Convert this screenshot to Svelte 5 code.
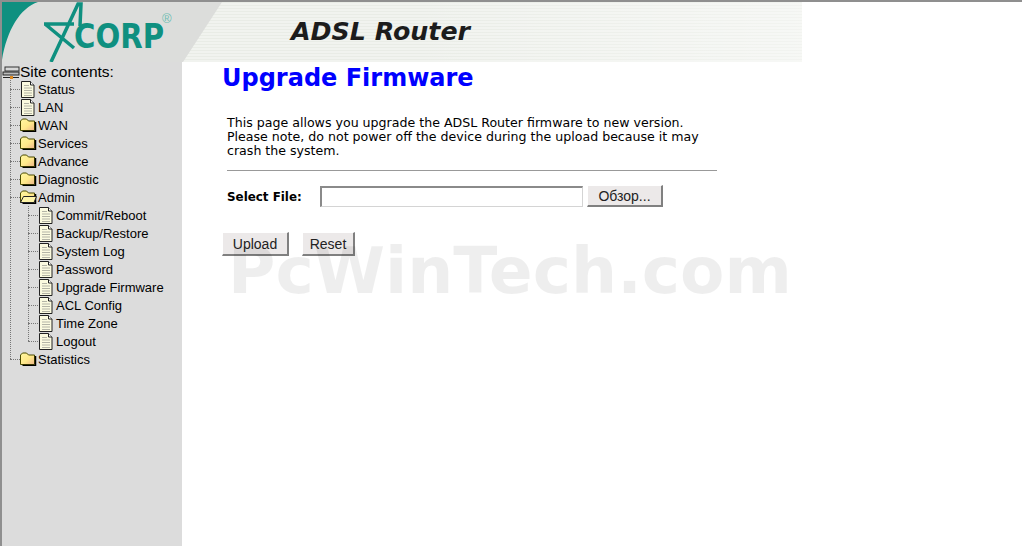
<script>
  const topItems = ['Status', 'LAN']
  const folders = ['WAN', 'Services', 'Advance', 'Diagnostic']
  const adminItems = ['Commit/Reboot', 'Backup/Restore', 'System Log', 'Password', 'Upgrade Firmware', 'ACL Config', 'Time Zone', 'Logout']
</script>

{#snippet docIcon()}
  <span class="box">
    <svg class="doc" width="14" height="17" viewBox="0 0 14 17">
      <path d="M.5.5h9l3.500 3.500v12.500h-12.500z" fill="#fbfadf" stroke="#222" />
      <path d="M9.500.5v3.500h3.500" fill="#fff" stroke="#222" />
      <path d="M3 4.500h5M3 7h8M3 9.500h8M3 12h8M3 14.500h8" stroke="#b4b4a6" />
    </svg>
  </span>
{/snippet}

{#snippet folderIcon(open)}
  <span class="box">
    <svg width="17" height="14" viewBox="0 0 17 14">
      <defs>
        <linearGradient id="fold" x1="0" y1="0" x2="1" y2="1">
          <stop offset="0" stop-color="#fff7a0" />
          <stop offset=".55" stop-color="#ffe98a" />
          <stop offset="1" stop-color="#eeb48c" />
        </linearGradient>
      </defs>
      <path d="M.5 3l2-2h4l2 2h6v9.500h-14z" fill="url(#fold)" stroke="#4a4a00" />
      <path d="M15.500 4v9.500h-13" fill="none" stroke="#000" stroke-width="1.500" />
      {#if open}
        <path d="M.5 12.500l3-6h13l-2.500 6z" fill="#fff5a8" stroke="#222" />
      {/if}
    </svg>
  </span>
{/snippet}

<div class="page">
  <header class="banner">
    <svg class="logo" width="134" height="60" viewBox="0 0 134 60">
      <path d="M2 22h30M3 22l29 24M9 60L36 2h3l-1 22" fill="none" stroke="#0f9080" stroke-width="3.500" />
      <text x="32" y="46" class="logotype" textLength="90" lengthAdjust="spacingAndGlyphs">CORP</text>
      <text x="120" y="21" class="reg">®</text>
    </svg>
    <div class="product">ADSL Router</div>
  </header>

  <div class="body-row">
    <nav class="tree">
      <div class="root">
        <svg class="root-icon" width="18" height="13" viewBox="0 0 18 13">
          <rect x="3" y="1" width="14" height="4" fill="#d8d8d8" stroke="#333" />
          <rect x="1" y="6" width="16" height="3" fill="#bbb" stroke="#222" />
          <path d="M1 11.500h16" stroke="#222" />
          <rect x="8" y="10" width="3" height="3" fill="#e08a20" />
        </svg>
        <span>Site contents:</span>
      </div>
      <ul class="level">
        {#each topItems as item}
          <li class="row"><i class="dash"></i>{@render docIcon()}<span>{item}</span></li>
        {/each}
        {#each folders as item}
          <li class="row"><i class="dash"></i>{@render folderIcon(false)}<span>{item}</span></li>
        {/each}
        <li class="row"><i class="dash"></i>{@render folderIcon(true)}<span>Admin</span></li>
        <li>
          <ul class="level sub">
            {#each adminItems as item}
              <li class="row"><i class="dash"></i>{@render docIcon()}<span>{item}</span></li>
            {/each}
          </ul>
        </li>
        <li class="row"><i class="dash"></i>{@render folderIcon(false)}<span>Statistics</span></li>
      </ul>
    </nav>

    <main class="content">
      <h1>Upgrade Firmware</h1>
      <p>This page allows you upgrade the ADSL Router firmware to new version.<br />Please note, do not power off the device during the upload because it may<br />crash the system.</p>
      <hr />
      <div class="file-row">
        <b>Select File:</b>
        <input type="text" class="file-input" />
        <button class="browse">Обзор...</button>
      </div>
      <div class="actions">
        <button class="upload">Upload</button>
        <button class="reset">Reset</button>
      </div>
    </main>
  </div>

  <div class="watermark">PcWinTech.com</div>
</div>

<style>
  :global(body) {
    margin: 0;
    background: #fff;
  }
  .page {
    position: relative;
    height: 546px;
    box-sizing: border-box;
    border-top: 2px solid #8f8f8f;
    border-left: 2px solid #8f8f8f;
    overflow: hidden;
  }
  .banner {
    position: relative;
    width: 800px;
    height: 60px;
    display: flex;
    align-items: center;
    background:
      linear-gradient(to right, rgba(255,255,255,0) 50%, rgba(255,255,255,.4) 100%),
      repeating-linear-gradient(to bottom, #e9ece6 0, #e9ece6 1px, #f1f3ef 1px, #f1f3ef 3px);
    overflow: hidden;
  }
  .banner::before {
    content: '';
    position: absolute;
    inset: 0;
    background: #dcdddb;
    clip-path: polygon(0 0, 220px 0, 181px 100%, 0 100%);
  }
  .banner::after {
    content: '';
    position: absolute;
    left: 0;
    top: 0;
    width: 36px;
    height: 58px;
    background: #0f9080;
    clip-path: path('M0 0H36C18 6 5 28 0 58Z');
  }
  .logo {
    position: relative;
    flex: none;
    margin-left: 40px;
  }
  .logotype {
    font-family: "DejaVu Sans", sans-serif;
    font-weight: 700;
    font-size: 33px;
    fill: #0f9080;
  }
  .reg {
    font-family: "Liberation Sans", sans-serif;
    font-size: 13px;
    fill: #6fbdb2;
  }
  .product {
    position: relative;
    margin-left: 115px;
    font-family: "DejaVu Sans", sans-serif;
    font-weight: 700;
    font-style: italic;
    font-size: 25.300px;
    color: #1c1c1c;
    margin-bottom: 2px;
  }
  .body-row {
    display: flex;
    height: 484px;
  }
  .tree {
    width: 180px;
    flex: none;
    background: #dcdcdc;
    font-family: "Liberation Sans", Arial, sans-serif;
    font-size: 13px;
    color: #000;
  }
  .root {
    display: flex;
    align-items: center;
    height: 18px;
    box-sizing: border-box;
    padding-top: 2px;
    font-size: 15.500px;
  }
  .root-icon {
    flex: none;
  }
  .level {
    position: relative;
    list-style: none;
    margin: 0 0 0 8px;
    padding: 0;
  }
  .level::before {
    content: '';
    position: absolute;
    left: 0;
    top: 0;
    bottom: 9px;
    border-left: 1px dotted #777;
  }
  .level.sub {
    margin-left: 18px;
  }
  .row {
    display: flex;
    align-items: center;
    height: 18px;
    white-space: nowrap;
  }
  .dash {
    width: 10px;
    flex: none;
    border-top: 1px dotted #777;
  }
  .box {
    width: 18px;
    height: 18px;
    flex: none;
    display: flex;
    align-items: center;
  }
  .doc {
    margin-left: 1px;
  }
  .content {
    padding-left: 40px;
    font-family: "DejaVu Sans", Verdana, sans-serif;
    font-size: 12.600px;
    color: #000;
    width: 495px;
  }
  h1 {
    margin: 0;
    padding-top: 1px;
    height: 32px;
    font-size: 24px;
    line-height: 30px;
    color: #0000ff;
    font-weight: 700;
    white-space: nowrap;
  }
  p {
    margin: 21px 0 0 5px;
    line-height: 14px;
    white-space: nowrap;
  }
  hr {
    margin: 12px 0 0 5px;
    border: 0;
    border-top: 1px solid #999;
    height: 0;
  }
  .file-row {
    display: flex;
    align-items: center;
    margin: 14px 0 0 5px;
  }
  .file-row b {
    width: 93px;
    flex: none;
    font-size: 11.900px;
    padding-top: 1px;
  }
  .file-input {
    width: 263px;
    height: 21px;
    box-sizing: border-box;
    border: 1px solid #d4d4d4;
    border-top: 2px solid #8a8a8a;
    border-left: 2px solid #8a8a8a;
    background: #fff;
    padding: 0;
    margin: 0 4px 0 0;
  }
  button {
    box-sizing: border-box;
    height: 24px;
    padding: 0;
    font-family: "Liberation Sans", Arial, sans-serif;
    font-size: 14px;
    color: #222;
    background: #ece9e9;
    border: 1px solid #fff;
    border-right: 2px solid #808080;
    border-bottom: 2px solid #808080;
    border-radius: 0;
  }
  .browse {
    width: 76px;
    height: 22px;
  }
  .upload {
    width: 67px;
  }
  .reset {
    width: 53px;
  }
  .actions {
    display: flex;
    gap: 13px;
    margin-top: 25px;
  }
  .watermark {
    position: absolute;
    left: 226px;
    top: 231px;
    font-family: "DejaVu Sans", sans-serif;
    font-weight: 700;
    font-size: 64.700px;
    line-height: 76px;
    color: rgba(0, 0, 0, .065);
    white-space: nowrap;
    pointer-events: none;
  }
</style>
